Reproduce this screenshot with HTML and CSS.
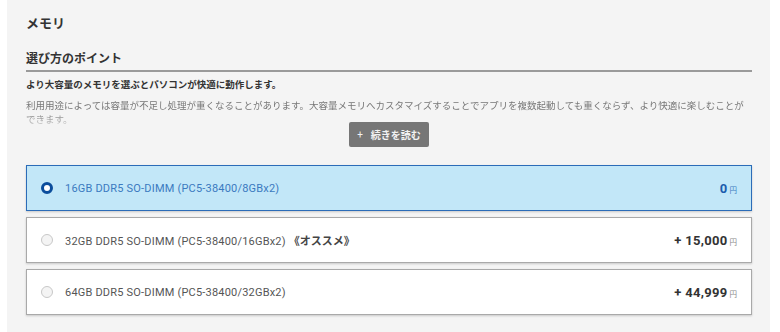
FILE: index.html
```html
<!DOCTYPE html>
<html lang="ja">
<head>
<meta charset="utf-8">
<link rel="stylesheet" href="styles.css">
</head>
<body>
<div class="panel">
  <h1 class="title">メモリ</h1>
  <h2 class="sub">選び方のポイント</h2>
  <p class="lead">より大容量のメモリを選ぶとパソコンが快適に動作します。</p>
  <p class="desc">利用用途によっては容量が不足し処理が重くなることがあります。大容量メモリへカスタマイズすることでアプリを複数起動しても重くならず、より快適に楽しむことができます。</p>
  <div class="more-wrap"><button class="more"><span class="plus">+</span>続きを読む</button></div>
  <ul class="options">
    <li class="opt selected">
      <span class="radio"></span>
      <span class="name">16GB DDR5 SO-DIMM (PC5-38400/8GBx2)</span>
      <span class="price"><b>0</b><small>円</small></span>
    </li>
    <li class="opt">
      <span class="radio"></span>
      <span class="name">32GB DDR5 SO-DIMM (PC5-38400/16GBx2) <b class="rec">《オススメ》</b></span>
      <span class="price"><b>+ 15,000</b><small>円</small></span>
    </li>
    <li class="opt">
      <span class="radio"></span>
      <span class="name">64GB DDR5 SO-DIMM (PC5-38400/32GBx2)</span>
      <span class="price"><b>+ 44,999</b><small>円</small></span>
    </li>
  </ul>
</div>
</body>
</html>
```
FILE: styles.css
```css
* { box-sizing: border-box; }
html, body { margin: 0; padding: 0; background: #ffffff; }
body {
  font-family: Roboto, "Noto Sans CJK JP", sans-serif;
  color: #333;
}
.panel {
  margin-left: 7px;
  width: 763px;
  height: 332px;
  background: #f4f4f4;
  padding: 14px 18px 0 19px;
  overflow: hidden;
}
.title {
  margin: 0;
  font-size: 13px;
  line-height: 20px;
  font-weight: 700;
  color: #333;
}
.sub {
  margin: 15px 0 0;
  font-size: 12px;
  line-height: 20px;
  font-weight: 700;
  color: #333;
  padding-bottom: 1px;
  border-bottom: 2px solid #9a9a9a;
}
.lead {
  margin: 6px 0 0;
  font-size: 9.5px;
  line-height: 14px;
  font-weight: 700;
  color: #333;
}
.desc {
  margin: 7px 0 0;
  font-size: 9.5px;
  line-height: 14px;
  color: #777;
  height: 28px;
  overflow: hidden;
  -webkit-mask-image: linear-gradient(to bottom, #000 0%, #000 45%, rgba(0,0,0,0.25) 100%);
  mask-image: linear-gradient(to bottom, #000 0%, #000 45%, rgba(0,0,0,0.25) 100%);
}
.more-wrap {
  display: flex;
  justify-content: center;
  margin-top: -5px;
}
.more {
  width: 80px;
  height: 25px;
  border: 0;
  border-radius: 2px;
  background: #767676;
  color: #f2f2f2;
  font-family: Roboto, "Noto Sans CJK JP", sans-serif;
  font-size: 10px;
  font-weight: 700;
  display: flex;
  align-items: center;
  justify-content: center;
  padding: 0;
}
.plus { margin-right: 8px; font-weight: 400; }
.options {
  list-style: none;
  margin: 18px 0 0;
  padding: 0;
  display: flex;
  flex-direction: column;
  gap: 6px;
}
.opt {
  height: 46px;
  display: flex;
  align-items: center;
  padding: 0 14px 0 14px;
  background: #fff;
  border: 1px solid #a9a9a9;
  box-shadow: 0 1px 2px rgba(0,0,0,0.18);
  font-size: 11px;
  letter-spacing: 0.2px;
  color: #555;
}
.radio {
  width: 12px;
  height: 12px;
  border-radius: 50%;
  border: 1px solid #c8c8c8;
  background: #f4f4f4;
  flex: none;
  margin-right: 12px;
}
.name { flex: 1; }
.rec { font-weight: 700; color: #444; letter-spacing: 0; }
.price b { font-size: 13px; font-weight: 700; color: #333; letter-spacing: 0.3px; }
.price small { font-size: 7.5px; color: #888; margin-left: 2px; letter-spacing: 0; }
.opt.selected {
  background: #c2e7f8;
  border: 1.5px solid #2b6cb8;
  color: #3b7ac0;
}
.opt.selected .radio {
  border: 3.5px solid #0b4d9c;
  background: #fff;
}
.opt.selected .price b { color: #1b5cad; }
.opt.selected .price small { color: #3b7ac0; }
```
